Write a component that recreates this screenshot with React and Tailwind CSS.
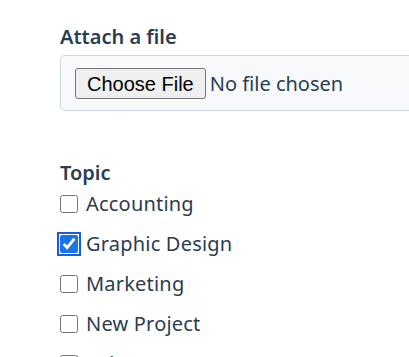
import React, { useState } from 'react';

const topics = ['Accounting', 'Graphic Design', 'Marketing', 'New Project', 'Other'];

function App() {
  const [checked, setChecked] = useState({ 'Graphic Design': true });

  const toggle = (name) => setChecked((c) => ({ ...c, [name]: !c[name] }));

  return (
    <div className="h-screen bg-white text-[#2b3d51] font-['Noto_Sans',sans-serif] overflow-hidden">
      <div className="pl-[60px] pt-[24px]">
        <label className="block text-[20px] font-semibold leading-[26px] mb-[5px]">Attach a file</label>
        <div className="w-[420px] h-[56px] flex items-center px-[14px] bg-[#f7f9fb] border border-[#cfd8e2] rounded-[5px]">
          <input
            type="file"
            className="text-[20px] text-[#2b3d51] file:font-['Liberation_Sans',sans-serif] file:text-[20px] file:text-black file:mr-[4px] file:px-[11px] file:h-[31px] file:bg-[#efefef] file:border file:border-[#767676] file:rounded-[3px]"
          />
        </div>

        <h3 className="mt-[49px] text-[20px] font-semibold leading-[26px]">Topic</h3>
        <div className="mt-[5px] flex flex-col gap-[14px]">
          {topics.map((t) => (
            <label key={t} className="flex items-center gap-[8px] text-[20px] leading-[26px] tracking-[0.2px]">
              <input
                type="checkbox"
                checked={!!checked[t]}
                onChange={() => toggle(t)}
                className={`m-0 w-[18px] h-[18px] accent-[#1a73e8] ${
                  t === 'Graphic Design' ? 'outline-2 outline-[#1560d8] outline-offset-[1px] rounded-[3px]' : ''
                }`}
              />
              {t}
            </label>
          ))}
        </div>
      </div>
    </div>
  );
}

export default App;
